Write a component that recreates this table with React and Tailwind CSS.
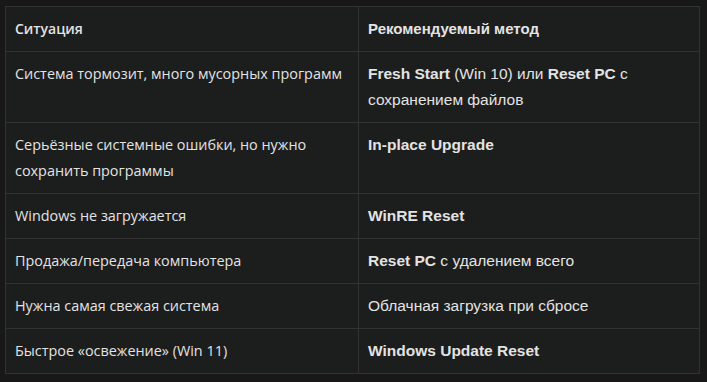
const rows = [
  [
    <>Система тормозит, много мусорных программ</>,
    <><b>Fresh Start</b> (Win 10) или <b>Reset PC</b> с сохранением файлов</>,
  ],
  [
    <>Серьёзные системные ошибки, но нужно сохранить программы</>,
    <><b>In-place Upgrade</b></>,
  ],
  [<>Windows не загружается</>, <><b>WinRE Reset</b></>],
  [<>Продажа/передача компьютера</>, <><b>Reset PC</b> с удалением всего</>],
  [<>Нужна самая свежая система</>, <>Облачная загрузка при сбросе</>],
  [<>Быстрое «освежение» (Win 11)</>, <><b>Windows Update Reset</b></>],
];

export default function App() {
  return (
    <div className="w-[707px] h-[382px] bg-[#181818] pt-[6px] pl-[5px] text-[#e3e3e3]">
      <table className="border-collapse table-fixed w-[694px]">
        <colgroup>
          <col className="w-[353px]" />
          <col className="w-[341px]" />
        </colgroup>
        <thead>
          <tr className="bg-[#1c1d1d]">
            <th className="border border-[#323232] px-[9px] py-[9px] text-left font-semibold leading-[26px] text-[14px] font-[Open_Sans]">Ситуация</th>
            <th className="border border-[#323232] px-[9px] py-[9px] text-left font-bold leading-[26px] text-[15px] font-[Liberation_Sans]">Рекомендуемый метод</th>
          </tr>
        </thead>
        <tbody>
          {rows.map((r, i) => (
            <tr key={i} className="bg-[#1c1d1d]">
              <td className="border border-[#323232] px-[9px] py-[9px] align-top leading-[26px] text-[14.4px] font-[Open_Sans]">{r[0]}</td>
              <td className="border border-[#323232] px-[9px] py-[9px] align-top leading-[26px] text-[15.5px] font-[Liberation_Sans] [&_b]:font-bold">{r[1]}</td>
            </tr>
          ))}
        </tbody>
      </table>
    </div>
  );
}
